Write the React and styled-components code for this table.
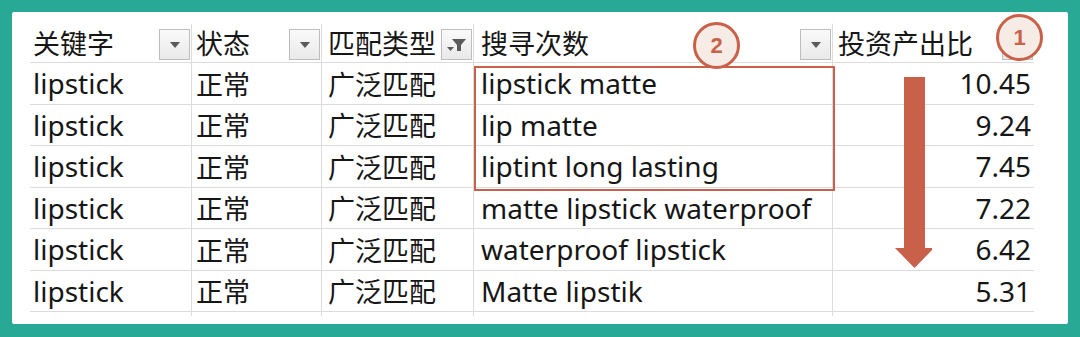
import React from "react";
import styled, { createGlobalStyle } from "styled-components";

const GlobalStyle = createGlobalStyle`
  html, body {
    margin: 0;
    padding: 0;
    background: #27a996;
  }
`;

const ACCENT = "#c9614a";
const GRID = "#dcdcdc";
const PADS = [3, 4, 6, 7, 5];

const Frame = styled.div`
  width: 1080px;
  height: 337px;
  box-sizing: border-box;
  padding: 12px 12px 13px 12px;
  background: #27a996;
`;

const Panel = styled.div`
  position: relative;
  height: 100%;
  background: #fff;
  border-radius: 2px;
  padding: 12px 34px 0 18px;
  box-sizing: border-box;
  font-family: "Noto Sans", "Noto Sans CJK SC", sans-serif;
  color: #161616;
`;

const Sheet = styled.div`
  display: grid;
  grid-template-columns: 162px 130px 152px 359px 201px;
  grid-template-rows: 39px repeat(6, 41.5px) 4px;
`;

const Cell = styled.div`
  display: flex;
  align-items: center;
  justify-content: ${(p) => (p.$num ? "flex-end" : "space-between")};
  box-sizing: border-box;
  padding: ${(p) => (p.$num ? "0 3px 0 0" : `0 0 0 ${p.$pad || 3}px`)};
  border-right: ${(p) => (p.$last ? "none" : `1px solid ${GRID}`)};
  border-bottom: ${(p) => (p.$stub ? "none" : `1.5px solid ${GRID}`)};
  font-size: 28px;
  line-height: 1;
  white-space: nowrap;
  overflow: hidden;
`;

const HeadCell = styled(Cell)`
  align-items: flex-start;
  padding-top: 5px;
  padding-right: 1px;
`;

const HeadText = styled.span`
  font-family: "Noto Sans CJK SC", sans-serif;
  font-size: 27px;
  line-height: 28px;
`;

const Drop = styled.div`
  width: 31px;
  height: 31px;
  box-sizing: border-box;
  border: 1.5px solid #bdbdbd;
  background: linear-gradient(#fafafa, #e9e9e9);
  display: flex;
  align-items: center;
  justify-content: center;
  flex-shrink: 0;
`;

const Circle = styled.div`
  position: absolute;
  width: 47px;
  height: 47px;
  box-sizing: border-box;
  border-radius: 50%;
  border: 3px solid ${ACCENT};
  background: #f7ebe5;
  color: ${ACCENT};
  font-family: "Liberation Sans", sans-serif;
  font-weight: bold;
  font-size: 22px;
  display: flex;
  align-items: center;
  justify-content: center;
  left: ${(p) => p.$x}px;
  top: ${(p) => p.$y}px;
`;

const Highlight = styled.div`
  position: absolute;
  left: 462px;
  top: 54px;
  width: 361px;
  height: 125px;
  box-sizing: border-box;
  border: 2px solid ${ACCENT};
`;

const Arrow = styled.svg`
  position: absolute;
  left: 880px;
  top: 65px;
`;

const CjkText = styled.span`
  font-family: "Noto Sans CJK SC", sans-serif;
  font-size: 27px;
`;

function DropButton({ filter }) {
  return (
    <Drop>
      {filter ? (
        <svg width="22" height="14" viewBox="0 0 22 14">
          <path d="M6 1h14l-5 6v6h-4V7z" fill="#5a5a5a" />
          <path d="M1 9h7l-3.5 4z" fill="#5a5a5a" />
        </svg>
      ) : (
        <svg width="10" height="6" viewBox="0 0 10 6">
          <path d="M0 0h10L5 6z" fill="#5a5a5a" />
        </svg>
      )}
    </Drop>
  );
}

const headers = [
  { label: "关键字" },
  { label: "状态" },
  { label: "匹配类型", filter: true },
  { label: "搜寻次数" },
  { label: "投资产出比" },
];

const rows = [
  ["lipstick matte", "10.45"],
  ["lip matte", "9.24"],
  ["liptint long lasting", "7.45"],
  ["matte lipstick waterproof", "7.22"],
  ["waterproof lipstick", "6.42"],
  ["Matte lipstik", "5.31"],
];

export default function App() {
  return (
    <>
      <GlobalStyle />
      <Frame>
        <Panel>
          <Sheet>
            {headers.map((h, i) => (
              <HeadCell key={h.label} $last={i === 4} $pad={PADS[i]}>
                <HeadText>{h.label}</HeadText>
                <DropButton filter={h.filter} />
              </HeadCell>
            ))}
            {rows.map(([term, ratio]) => (
              <React.Fragment key={term}>
                <Cell $pad={PADS[0]}>lipstick</Cell>
                <Cell $pad={PADS[1]}><CjkText>正常</CjkText></Cell>
                <Cell $pad={PADS[2]}><CjkText>广泛匹配</CjkText></Cell>
                <Cell $pad={PADS[3]}>{term}</Cell>
                <Cell $num $last>{ratio}</Cell>
              </React.Fragment>
            ))}
            {headers.map((h, i) => (
              <Cell key={"stub" + i} $stub $last={i === 4} />
            ))}
          </Sheet>

          <Highlight />
          <Arrow width="40" height="192" viewBox="0 0 40 192">
            <path d="M12 0h21v171h9l-19.5 20L3 171h9z" fill={ACCENT} />
          </Arrow>
          <Circle $x={984} $y={2}>1</Circle>
          <Circle $x={681} $y={10}>2</Circle>
        </Panel>
      </Frame>
    </>
  );
}
